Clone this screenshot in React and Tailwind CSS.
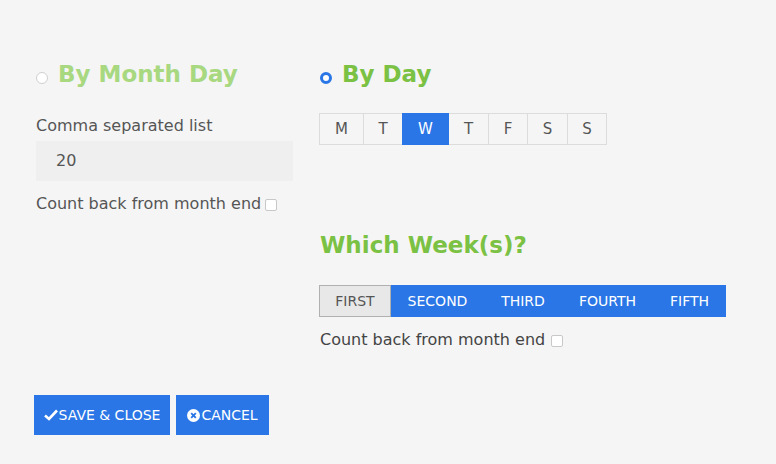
import React from "react";

const days = [
  ["M", "w-[45px]"],
  ["T", "w-[40px]"],
  ["W", "w-[47px]"],
  ["T", "w-[41px]"],
  ["F", "w-[40px]"],
  ["S", "w-[41px]"],
  ["S", "w-[40px]"],
];

function Check() {
  return <span className="inline-block w-[12px] h-[12px] border border-[#c8c8c8] rounded-[2px] bg-white align-middle mt-[2px]" />;
}

export default function App() {
  return (
    <div className="w-[776px] h-[464px] bg-[#f5f5f5] text-[#555] font-['DejaVu_Sans',sans-serif] overflow-hidden">
      <div className="flex pt-[60px] pl-[36px]">
        <div className="w-[284px] flex flex-col">
          <div className="flex items-center h-[28px] gap-[10px]">
            <span className="w-[12px] h-[12px] rounded-full border border-[#d0d0d0] bg-white mt-[8px]" />
            <span className="text-[23px] font-bold text-[#a8d880] leading-none">By Month Day</span>
          </div>
          <div className="mt-[28px] text-[16px] leading-[20px]">Comma separated list</div>
          <div className="mt-[5px] w-[257px] h-[40px] bg-[#efefef] flex items-center pl-[20px] text-[16px]">20</div>
          <div className="mt-[13px] flex items-center gap-[4px] text-[16px] leading-[20px]">
            <span>Count back from month end</span>
            <Check />
          </div>
        </div>
        <div className="flex flex-col">
          <div className="flex items-center h-[28px] gap-[10px]">
            <span className="w-[12px] h-[12px] rounded-full border-[3px] border-[#2a76e6] bg-white mt-[8px]" />
            <span className="text-[23px] font-bold text-[#7bc143] leading-none">By Day</span>
          </div>
          <div className="mt-[25px] flex -ml-px">
            {days.map(([d, w], i) => (
              <div
                key={i}
                className={
                  "h-[32px] flex items-center justify-center text-[15px] border " +
                  w +
                  (i === 2
                    ? " bg-[#2a76e6] border-[#2a76e6] text-white relative"
                    : " border-[#dcdcdc] text-[#555]") +
                  (i > 0 ? " -ml-px" : "")
                }
              >
                {d}
              </div>
            ))}
          </div>
          <div className="mt-[89px] text-[23px] font-bold text-[#7bc143] leading-none">Which Week(s)?</div>
          <div className="mt-[28px] flex -ml-px">
            <div className="h-[32px] w-[72px] flex items-center justify-center text-[14px] bg-[#e8e8e8] border border-[#b0b0b0] text-[#555]">FIRST</div>
            <div className="h-[32px] w-[93px] flex items-center justify-center text-[14px] bg-[#2a76e6] text-white">SECOND</div>
            <div className="h-[32px] w-[78px] flex items-center justify-center text-[14px] bg-[#2a76e6] text-white">THIRD</div>
            <div className="h-[32px] w-[91px] flex items-center justify-center text-[14px] bg-[#2a76e6] text-white">FOURTH</div>
            <div className="h-[32px] w-[73px] flex items-center justify-center text-[14px] bg-[#2a76e6] text-white">FIFTH</div>
          </div>
          <div className="mt-[13px] flex items-center gap-[6px] text-[16px] leading-[20px] text-[#444]">
            <span>Count back from month end</span>
            <Check />
          </div>
        </div>
      </div>
      <div className="flex gap-[6px] pl-[34px] mt-[45px]">
        <button className="h-[40px] w-[136px] justify-center bg-[#2a76e6] text-white text-[14px] flex items-center gap-[1px]">
          <svg width="14" height="12" viewBox="0 0 14 12"><path d="M1 6.5 L5 10 L13 1.5" stroke="white" strokeWidth="2.6" fill="none" /></svg>
          SAVE &amp; CLOSE
        </button>
        <button className="h-[40px] w-[93px] justify-center bg-[#2a76e6] text-white text-[14px] flex items-center gap-[1px]">
          <svg width="13" height="13" viewBox="0 0 14 14"><circle cx="7" cy="7" r="7" fill="white" /><path d="M4.5 4.5 L9.5 9.5 M9.5 4.5 L4.5 9.5" stroke="#2a76e6" strokeWidth="2" /></svg>
          CANCEL
        </button>
      </div>
    </div>
  );
}
